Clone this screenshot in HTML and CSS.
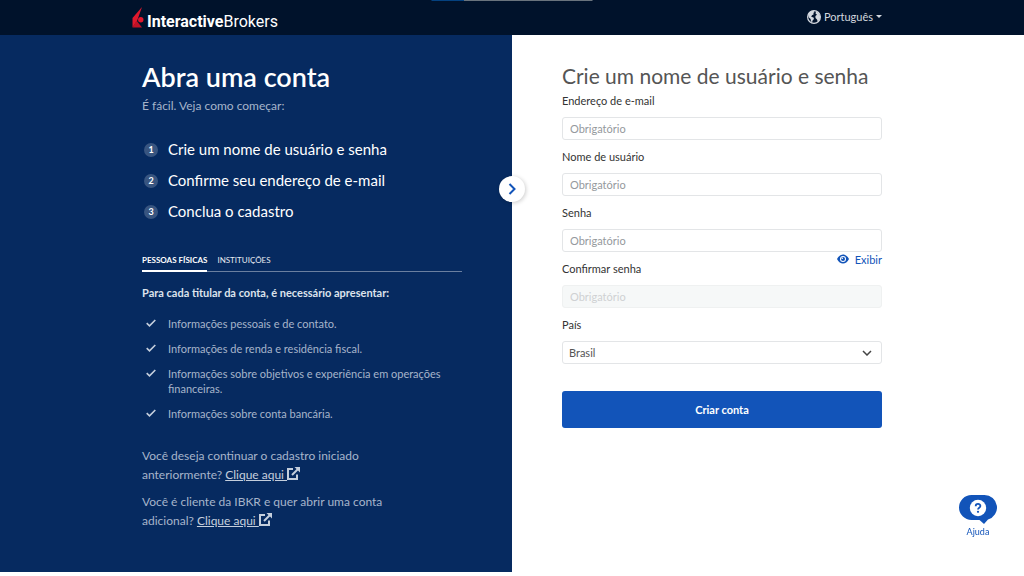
FILE: index.html
```
<!DOCTYPE html>
<html lang="pt-BR">
<head>
<meta charset="UTF-8">
<meta name="viewport" content="width=device-width, initial-scale=1.0">
<title>Abra uma conta | Interactive Brokers</title>
<link rel="stylesheet" href="styles.css">
</head>
<body>
<header class="header">
  <div class="progress"></div>
  <div class="header-inner">
    <a class="logo" href="#">
      <svg width="14" height="22" viewBox="0 0 14 22">
        <path d="M10 0 L0.500 11 V20.500 L5 14 Z" fill="#e0182d"/>
        <path d="M0.500 20.500 L4.500 13.500 L10 20.500 Z" fill="#c01226"/>
        <circle cx="8.800" cy="12.800" r="2.700" fill="#e0182d"/>
      </svg>
      <span><b>Interactive</b>Brokers</span>
    </a>
    <button class="language" type="button">
      <svg width="14" height="14" viewBox="0 0 14 14">
        <circle cx="7" cy="7" r="6.400" fill="#00122b" stroke="#d3d8df" stroke-width="1.200"/>
        <path d="M1 4.500 C2 2 4 .800 6.500 .700 L7.600 2 L6.300 3 L6.800 4.200 L5 5.300 L4.200 6.700 L6.500 7.600 L7 9 L5.600 10.500 L5 12.800 L3.900 11 L3.600 9 L1.600 7.300 Z" fill="#d3d8df"/>
        <path d="M9 1.500 L11.500 2.800 L13.200 6 L12.800 9.500 L10.800 11.700 L10 9.500 L8.500 8 L8.400 6 L10 4.800 L8.500 3.500 Z" fill="#d3d8df"/>
      </svg>
      Português
      <span class="caret"></span>
    </button>
  </div>
</header>

<main class="main">
  <section class="intro">
    <div class="column">
      <h1>Abra uma conta</h1>
      <p class="subtitle">É fácil. Veja como começar:</p>
      <ol class="steps">
        <li><span class="number">1</span>Crie um nome de usuário e senha</li>
        <li><span class="number">2</span>Confirme seu endereço de e-mail</li>
        <li><span class="number">3</span>Conclua o cadastro</li>
      </ol>

      <div class="tabs">
        <button class="tab active" type="button">PESSOAS FÍSICAS</button>
        <button class="tab" type="button">INSTITUIÇÕES</button>
      </div>
      <p class="required">Para cada titular da conta, é necessário apresentar:</p>
      <ul class="checklist">
        <li><svg width="10" height="8" viewBox="0 0 10 8"><path d="M.7 4.200 L3.500 6.800 L9.300 1"/></svg>Informações pessoais e de contato.</li>
        <li><svg width="10" height="8" viewBox="0 0 10 8"><path d="M.7 4.200 L3.500 6.800 L9.300 1"/></svg>Informações de renda e residência fiscal.</li>
        <li><svg width="10" height="8" viewBox="0 0 10 8"><path d="M.7 4.200 L3.500 6.800 L9.300 1"/></svg>Informações sobre objetivos e experiência em operações financeiras.</li>
        <li><svg width="10" height="8" viewBox="0 0 10 8"><path d="M.7 4.200 L3.500 6.800 L9.300 1"/></svg>Informações sobre conta bancária.</li>
      </ul>

      <div class="notes">
        <p>Você deseja continuar o cadastro iniciado anteriormente? <a href="#">Clique aqui <svg width="13" height="13" viewBox="0 0 13 13"><path d="M6 2 H1 V12 H10 V7.500"/><path d="M5 8 L11 2"/><path class="head" d="M7.500 0 H13 V5.500 Z"/></svg></a></p>
        <p>Você é cliente da IBKR e quer abrir uma conta adicional? <a href="#">Clique aqui <svg width="13" height="13" viewBox="0 0 13 13"><path d="M6 2 H1 V12 H10 V7.500"/><path d="M5 8 L11 2"/><path class="head" d="M7.500 0 H13 V5.500 Z"/></svg></a></p>
      </div>
    </div>
    <button class="toggle" type="button" aria-label="Expandir">
      <svg width="8" height="12" viewBox="0 0 8 12"><path d="M1.500 1 L6.500 6 L1.500 11"/></svg>
    </button>
  </section>

  <section class="signup">
    <form class="column">
      <h2>Crie um nome de usuário e senha</h2>
      <div class="field">
        <label for="email">Endereço de e-mail</label>
        <input type="email" id="email" placeholder="Obrigatório">
      </div>
      <div class="field">
        <label for="username">Nome de usuário</label>
        <input type="text" id="username" placeholder="Obrigatório">
      </div>
      <div class="field">
        <label for="password">Senha</label>
        <input type="password" id="password" placeholder="Obrigatório">
        <button class="show" type="button">
          <svg width="12" height="10" viewBox="0 0 12 10">
            <path d="M0 5 C3 -1 9 -1 12 5 C9 11 3 11 0 5 Z" fill="#1254b9"/>
            <circle cx="6" cy="5" r="3" fill="#fff"/>
            <circle cx="6" cy="5" r="2" fill="#1254b9"/>
            <circle cx="5.300" cy="4.300" r=".8" fill="#fff"/>
          </svg>
          Exibir
        </button>
      </div>
      <div class="field">
        <label for="confirm">Confirmar senha</label>
        <input type="password" id="confirm" placeholder="Obrigatório" disabled>
      </div>
      <div class="field">
        <label for="country">País</label>
        <select id="country">
          <option>Brasil</option>
        </select>
      </div>
      <button class="submit" type="submit">Criar conta</button>
    </form>
  </section>
</main>

<a class="help" href="#">
  <svg width="38" height="30" viewBox="0 0 38 30">
    <path d="M12.500 0 H25.500 A12.500 12.500 0 0 1 29 24.500 L25 29 L20.500 25 H12.500 A12.500 12.500 0 0 1 12.500 0 Z" fill="#1254b9"/>
    <circle cx="19" cy="13" r="8.200" fill="#fff"/>
    <path d="M16.700 11.200 C16.700 8.200 21.400 8.200 21.400 11 C21.400 12.800 19 12.700 19 14.500" fill="none" stroke="#1254b9" stroke-width="1.800"/>
    <circle cx="19" cy="16.800" r="1.100" fill="#1254b9"/>
  </svg>
  Ajuda
</a>
</body>
</html>
```
FILE: styles.css
```
* {
  box-sizing: border-box;
}

body {
  display: flex;
  flex-direction: column;
  min-height: 100vh;
  margin: 0;
  padding-bottom: 4px;
  background: #fff;
  color: #333;
  font-family: Lato, sans-serif;
  font-size: 11px;
}

h1, h2, p, ol, ul {
  margin: 0;
  padding: 0;
  list-style: none;
}

button {
  padding: 0;
  border: none;
  background: none;
  font-family: inherit;
  cursor: pointer;
}

/* Header */
.header {
  position: relative;
  padding: 0 20px;
  background: #00122b;
}

.header-inner {
  display: flex;
  align-items: center;
  justify-content: space-between;
  max-width: 760px;
  height: 35px;
  margin: 0 auto;
  padding-right: 10px;
}

.progress {
  position: absolute;
  top: 0;
  left: 50%;
  width: 161px;
  height: 1px;
  background: linear-gradient(to right, #04417f 20%, #69737d 20%);
  transform: translateX(-50%);
}

.logo {
  display: flex;
  align-items: center;
  gap: 1px;
  color: #fff;
  font-family: Roboto, sans-serif;
  font-size: 16px;
  text-decoration: none;
}

.logo span {
  padding-top: 8px;
}

.language {
  display: flex;
  align-items: center;
  gap: 3px;
  padding-bottom: 2px;
  color: #d3d8df;
  font-size: 11px;
}

.caret {
  border: 3px solid transparent;
  border-top-color: #d3d8df;
  border-bottom: none;
}

/* Page halves */
.main {
  display: flex;
  flex: 1;
}

.intro {
  position: relative;
  display: flex;
  justify-content: flex-end;
  flex: 1;
  padding: 26px 50px 30px 20px;
  background: #062a60;
  color: #fff;
}

.signup {
  flex: 1;
  padding: 25px 20px 30px 50px;
}

.column {
  width: 100%;
  max-width: 320px;
}

h1 {
  font-size: 27px;
  font-weight: 600;
  line-height: 32px;
}

.subtitle {
  margin-top: 3px;
  color: #a6b5cb;
  font-size: 12px;
  line-height: 20px;
}

.steps {
  margin-top: 18px;
}

.steps li {
  display: flex;
  align-items: center;
  gap: 10px;
  padding-left: 2px;
  font-size: 15px;
  line-height: 31px;
}

.number {
  width: 14px;
  height: 14px;
  border-radius: 50%;
  background: #385580;
  font-size: 9px;
  font-weight: 700;
  line-height: 14px;
  text-align: center;
}

.tabs {
  display: flex;
  gap: 10px;
  margin-top: 25px;
  border-bottom: 1px solid #6a7fa0;
}

.tab {
  margin-bottom: -1px;
  padding-bottom: 2px;
  border-bottom: 2px solid transparent;
  color: #e6eaf0;
  font-size: 8px;
  line-height: 16px;
}

.tab.active {
  border-bottom-color: #fff;
  color: #fff;
  font-weight: 700;
}

.required {
  margin-top: 13px;
  color: #dde3ec;
  font-weight: 700;
  line-height: 15px;
}

.checklist {
  display: flex;
  flex-direction: column;
  gap: 10px;
  margin-top: 16px;
  color: #a6b5cb;
  line-height: 15px;
}

.checklist li {
  display: flex;
  gap: 12px;
  padding-left: 4px;
}

.checklist svg {
  flex: none;
  margin-top: 3px;
  fill: none;
  stroke: #c5cfdd;
  stroke-width: 1.6;
}

.notes {
  display: flex;
  flex-direction: column;
  gap: 8px;
  max-width: 260px;
  margin-top: 25px;
  color: #a6b5cb;
  font-size: 12px;
  line-height: 19px;
}

.notes a {
  color: #c5cfdd;
}

.notes svg {
  vertical-align: -1px;
  fill: none;
  stroke: #c5cfdd;
  stroke-width: 2;
}

.notes .head {
  fill: #c5cfdd;
  stroke: none;
}

.toggle {
  position: absolute;
  top: 141px;
  right: -13px;
  display: flex;
  align-items: center;
  justify-content: center;
  width: 26px;
  height: 26px;
  border-radius: 50%;
  background: #fff;
  box-shadow: 1px 1px 4px rgba(0, 0, 0, 0.2);
}

.toggle svg {
  fill: none;
  stroke: #1254b9;
  stroke-width: 2;
}

/* Form */
h2 {
  margin-bottom: 1px;
  color: #555;
  font-size: 21px;
  font-weight: 400;
  line-height: 32px;
  white-space: nowrap;
}

.field {
  display: flex;
  flex-direction: column;
  margin-bottom: 9px;
}

label {
  margin-bottom: 8px;
  line-height: 16px;
}

input, select {
  width: 100%;
  height: 23px;
  padding: 0 7px;
  border: 1px solid #e3e5e7;
  border-radius: 3px;
  background: #fff;
  color: #555;
  font-family: inherit;
  font-size: 11px;
}

input::placeholder {
  color: #95999d;
}

input:disabled {
  border-color: #eff1f1;
  background: #f6f8f8;
}

input:disabled::placeholder {
  color: #cfd1d3;
}

select {
  padding: 0 6px;
  appearance: none;
  background: #fff url("data:image/svg+xml,%3Csvg xmlns='http://www.w3.org/2000/svg' width='10' height='6' viewBox='0 0 10 6'%3E%3Cpath d='M1 1l4 4 4-4' fill='none' stroke='%23444' stroke-width='1.500'/%3E%3C/svg%3E") no-repeat right 9px center;
}

/* Hangs in the gap above the next field */
.show {
  display: flex;
  align-items: center;
  align-self: flex-end;
  gap: 6px;
  height: 14px;
  margin-bottom: -14px;
  color: #1254b9;
  font-size: 11px;
}

.submit {
  width: 100%;
  height: 37px;
  margin-top: 18px;
  border-radius: 3px;
  background: #1254b9;
  color: #fff;
  font-size: 11px;
  font-weight: 700;
}

.help {
  position: fixed;
  right: 27px;
  bottom: 39px;
  display: flex;
  flex-direction: column;
  align-items: center;
  gap: 1px;
  color: #1254b9;
  font-size: 9px;
  text-decoration: none;
}
```
